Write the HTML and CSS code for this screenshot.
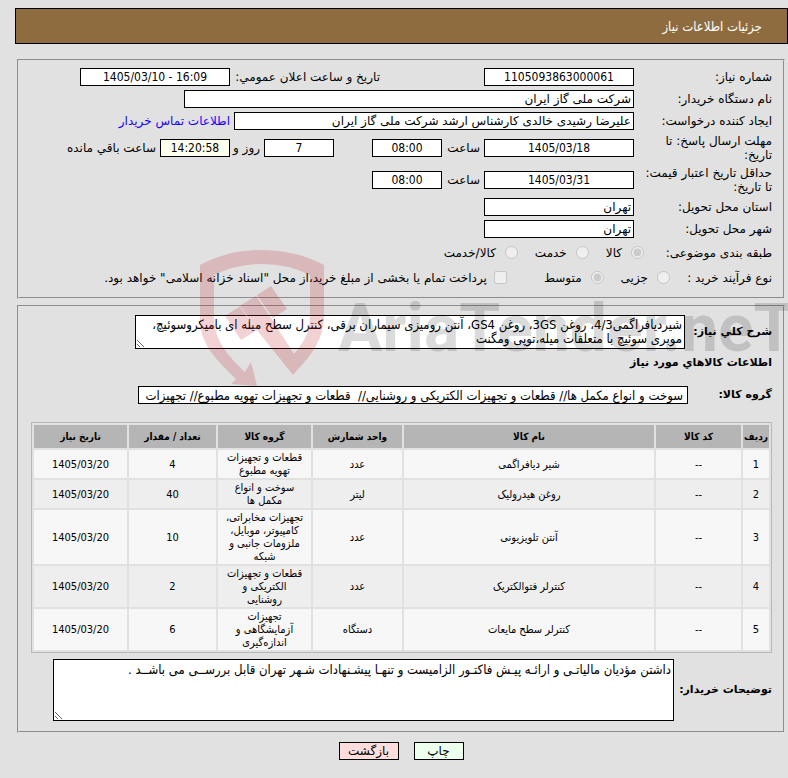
FILE: index.html
```html
<!DOCTYPE html>
<html lang="fa" dir="rtl">
<head>
<meta charset="UTF-8">
<meta name="viewport" content="width=device-width, initial-scale=1.0">
<title>جزئیات اطلاعات نیاز</title>
<link rel="stylesheet" href="styles.css">
</head>
<body>

<header class="page-title">جزئیات اطلاعات نیاز</header>

<main class="content">
<form class="need-form">

    <fieldset class="panel">
        <div class="row">
            <label class="label" for="needNo">شماره نیاز:</label>
            <input class="field medium center" id="needNo" type="text" value="1105093863000061" readonly>
            <label class="announce" for="announceDate">تاریخ و ساعت اعلان عمومي:</label>
            <input class="field medium center" id="announceDate" type="text" dir="ltr" value="1405/03/10 - 16:09" readonly>
        </div>
        <div class="row">
            <label class="label" for="orgName">نام دستگاه خریدار:</label>
            <input class="field org" id="orgName" type="text" value="شرکت ملی گاز ایران" readonly>
        </div>
        <div class="row">
            <label class="label" for="creator">ایجاد کننده درخواست:</label>
            <input class="field creator" id="creator" type="text" value="علیرضا رشیدی خالدی کارشناس ارشد شرکت ملی گاز ایران" readonly>
            <a class="contact" href="#">اطلاعات تماس خریدار</a>
        </div>
        <div class="row tall">
            <label class="label" for="replyDate">مهلت ارسال پاسخ: تا تاریخ:</label>
            <input class="field medium center" id="replyDate" type="text" value="1405/03/18" readonly>
            <label class="hour" for="replyTime">ساعت</label>
            <input class="field small center" id="replyTime" type="text" value="08:00" readonly>
            <input class="field small center days" id="daysLeft" type="text" value="7" aria-label="روز" readonly>
            <label class="and" for="timeLeft">روز و</label>
            <input class="field small center remain" id="timeLeft" type="text" value="14:20:58" readonly>
            <span>ساعت باقي مانده</span>
        </div>
        <div class="row tall">
            <label class="label" for="priceDate">حداقل تاریخ اعتبار قیمت: تا تاریخ:</label>
            <input class="field medium center" id="priceDate" type="text" value="1405/03/31" readonly>
            <label class="hour" for="priceTime">ساعت</label>
            <input class="field small center" id="priceTime" type="text" value="08:00" readonly>
        </div>
        <div class="row">
            <label class="label" for="province">استان محل تحویل:</label>
            <input class="field medium" id="province" type="text" value="تهران" readonly>
        </div>
        <div class="row">
            <label class="label" for="city">شهر محل تحویل:</label>
            <input class="field medium" id="city" type="text" value="تهران" readonly>
        </div>
        <div class="row options">
            <span class="label subject">طبقه بندی موضوعی:</span>
            <label class="option"><input type="radio" name="subject" checked disabled>کالا</label>
            <label class="option"><input type="radio" name="subject" disabled>خدمت</label>
            <label class="option"><input type="radio" name="subject" disabled>کالا/خدمت</label>
        </div>
        <div class="row options">
            <span class="label process">نوع فرآیند خرید :</span>
            <label class="option"><input type="radio" name="process" disabled>جزیی</label>
            <label class="option"><input type="radio" name="process" checked disabled>متوسط</label>
            <label class="option treasury"><input type="checkbox" disabled>پرداخت تمام یا بخشی از مبلغ خرید،از محل "اسناد خزانه اسلامی" خواهد بود.</label>
        </div>
    </fieldset>

    <fieldset class="panel goods">
        <div class="row">
            <label class="bold" for="summary">شرح کلي نیاز:</label>
            <textarea class="field long-text summary" id="summary" readonly>شیردیافراگمی4/3، روغن 3GS، روغن GS4، آنتن رومیزی سیماران برقی، کنترل سطح میله ای بامیکروسوئیچ، موبری سوئیچ با متعلقات میله،توپی ومگنت</textarea>
        </div>
        <h2 class="subtitle">اطلاعات کالاهاي مورد نیاز</h2>
        <div class="row group">
            <label class="bold group-label" for="goodsGroup">گروه کالا:</label>
            <input class="field long-text group-field" id="goodsGroup" type="text" value="سوخت و انواع مکمل ها// قطعات و تجهیزات الکتریکی و روشنایی//  قطعات و تجهیزات تهویه مطبوع// تجهیزات" readonly>
        </div>

        <table class="items">
            <colgroup>
                <col class="c-row"><col class="c-code"><col class="c-name"><col class="c-unit"><col class="c-group"><col class="c-count"><col class="c-date">
            </colgroup>
            <thead>
                <tr><th>ردیف</th><th>کد کالا</th><th>نام کالا</th><th>واحد شمارش</th><th>گروه کالا</th><th>تعداد / مقدار</th><th>تاریخ نیاز</th></tr>
            </thead>
            <tbody>
                <tr><td>1</td><td>--</td><td>شیر دیافراگمی</td><td>عدد</td><td>قطعات و تجهیزات تهویه مطبوع</td><td>4</td><td>1405/03/20</td></tr>
                <tr><td>2</td><td>--</td><td>روغن هیدرولیک</td><td>لیتر</td><td>سوخت و انواع مکمل ها</td><td>40</td><td>1405/03/20</td></tr>
                <tr><td>3</td><td>--</td><td>آنتن تلویزیونی</td><td>عدد</td><td>تجهیزات مخابراتی، کامپیوتر، موبایل، ملزومات جانبی و شبکه</td><td>10</td><td>1405/03/20</td></tr>
                <tr><td>4</td><td>--</td><td>کنترلر فتوالکتریک</td><td>عدد</td><td>قطعات و تجهیزات الکتریکی و روشنایی</td><td>2</td><td>1405/03/20</td></tr>
                <tr><td>5</td><td>--</td><td>کنترلر سطح مایعات</td><td>دستگاه</td><td>تجهیزات آزمایشگاهی و اندازه‌گیری</td><td>6</td><td>1405/03/20</td></tr>
            </tbody>
        </table>

        <div class="row notes-row">
            <label class="bold notes-label" for="notes">توضیحات خریدار:</label>
            <textarea class="field long-text notes" id="notes" readonly>داشتن مؤدیان مالیاتـی و ارائـه پیـش فاکتـور الزامیست و تنهـا پیشـنهادات شـهر تهران قابل بررســی می باشــد .</textarea>
        </div>
    </fieldset>

    <div class="buttons">
        <button class="btn print" type="button">چاپ</button>
        <button class="btn back" type="button">بازگشت</button>
    </div>
</form>
</main>

<!-- site watermark, lies over the form -->
<svg class="watermark" width="590" height="150" viewBox="198 240 590 150" direction="ltr" aria-hidden="true">
    <g fill="#b90f19" opacity="0.19">
        <path d="M200 265Q228 250 262 250Q296 250 324 265V314C324 342 310 356 293 375L257 330L241 340L225 316L239 307L241 305L256 296L271 318L294 354C306 340 310 330 310 314V275Q288 264 262 264Q236 264 214 275V318C214 340 228 356 245 372L251 362L257 386L231 384L236 379C212 356 200 342 200 318Z"/>
        <path d="M257 295L271 286L287 309L273 318Z"/>
    </g>
    <path d="M240 306L256 330" stroke="#fff" stroke-opacity="0.4" stroke-width="1"/>
    <text class="watermark-text" x="338" y="351">AriaTender.neT</text>
</svg>

</body>
</html>
```
FILE: styles.css
```css
* {
    box-sizing: border-box;
}

body {
    margin: 0;
    padding: 8px 0 0;
    background-color: #e1e1e1;
    color: #000;
    font-family: "DejaVu Sans", sans-serif;
    font-size: 12px;
    line-height: 14px;
    position: relative;
}

input, textarea, button {
    font-family: inherit;
    font-size: inherit;
    color: inherit;
}

.page-title {
    margin-left: 15px;
    padding: 11px 25px;
    height: 36px;
    border: 1px solid #000;
    background-color: #8f6c40;
    color: #fff;
    font-family: "DejaVu Sans Condensed", sans-serif;
    font-size: 13px;
}

.content {
    padding: 15px 3px 0 17px;
}

/* Panels */
.panel {
    margin: 0 0 6px;
    padding: 5px 11px 7px 12px;
    min-width: 0;
    border: 2px groove #e1e1e1;
}

.row {
    display: flex;
    align-items: center;
    gap: 4px;
    min-height: 22px;
    white-space: nowrap;
}

.row.tall {
    min-height: 32px;
}

.row.options {
    min-height: 25px;
}

.label {
    flex: none;
    width: 134px;
    white-space: normal;
}

.field {
    height: 18px;
    margin: 0;
    padding: 0 2px;
    border: 1px solid #000;
    border-radius: 0;
    background-color: #fff;
}

/* numbers and dates */
.center {
    font-family: "DejaVu Sans Condensed", sans-serif;
    text-align: center;
}

.long-text {
    font-family: "DejaVu Sans Condensed", sans-serif;
    font-size: 13px;
}

.medium {
    width: 150px;
}

.small {
    width: 70px;
}

.org {
    width: 450px;
}

.creator {
    width: 400px;
}

.announce {
    width: 146px;
    margin-right: 100px;
}

.contact {
    color: #1a00ff;
    text-decoration: none;
}

.hour {
    width: 34px;
}

.days {
    margin-right: 34px;
}

.and {
    width: 26px;
}

.remain {
    background-color: #ffffee;
}

/* Radio buttons and tick box */
.option {
    display: flex;
    align-items: center;
    gap: 9px;
    margin-left: 13px;
}

.option input {
    width: 13px;
    height: 13px;
    margin: 0;
}

.label.subject {
    width: 124px;
}

.label.process {
    width: 98px;
}

.treasury {
    gap: 7px;
    margin: 0 20px 0 0;
}

/* Goods */
.goods {
    margin: 0;
    padding-top: 8px;
    padding-bottom: 10px;
}

.bold {
    flex: none;
    width: 83px;
    font-size: 11px;
    font-weight: bold;
}

.summary {
    width: 550px;
    height: 34px;
    padding: 2px;
    line-height: 14px;
    overflow: hidden;
    white-space: pre-wrap;
}

.subtitle {
    margin: 6px 0 13px;
    font-size: 11px;
    line-height: 16px;
}

.bold.group-label {
    width: 80px;
}

.group-field {
    width: 550px;
    padding: 0 4px;
}

.items {
    width: 100%;
    margin-top: 16px;
    border: 1px solid #b8b8b8;
    border-spacing: 2px;
    table-layout: fixed;
    font-family: "DejaVu Sans Condensed", sans-serif;
    font-size: 11px;
    line-height: 13px;
    text-align: center;
}

.items th {
    height: 23px;
    padding: 0;
    background-color: #b5b5b5;
    font-size: 10px;
}

.items td {
    padding: 1px 7px;
    background-color: #f7f7f7;
}

.items tr:nth-child(even) td {
    background-color: #eee;
}

.c-row { width: 26px; }
.c-code { width: 85px; }
.c-unit { width: 89px; }
.c-group { width: 93px; }
.c-count { width: 87px; }
.c-date { width: 93px; }

.notes-row {
    margin-top: 6px;
}

.bold.notes-label {
    width: 94px;
}

.notes {
    width: 621px;
    height: 62px;
    padding: 2px;
    line-height: 16px;
    white-space: pre-wrap;
}

/* Buttons */
.buttons {
    display: flex;
    justify-content: center;
    gap: 15px;
    padding-top: 9px;
}

.btn {
    height: 18px;
    padding: 0;
    border: 1px solid #000;
}

.print {
    width: 50px;
    background-color: #edffed;
}

.back {
    width: 60px;
    background-color: #ffdddd;
}

/* Watermark */
.watermark {
    position: absolute;
    top: 240px;
    left: 198px;
    pointer-events: none;
}

.watermark-text {
    font-family: Roboto, sans-serif;
    font-size: 66px;
    font-weight: bold;
    fill: #000;
    fill-opacity: 0.14;
}
```
